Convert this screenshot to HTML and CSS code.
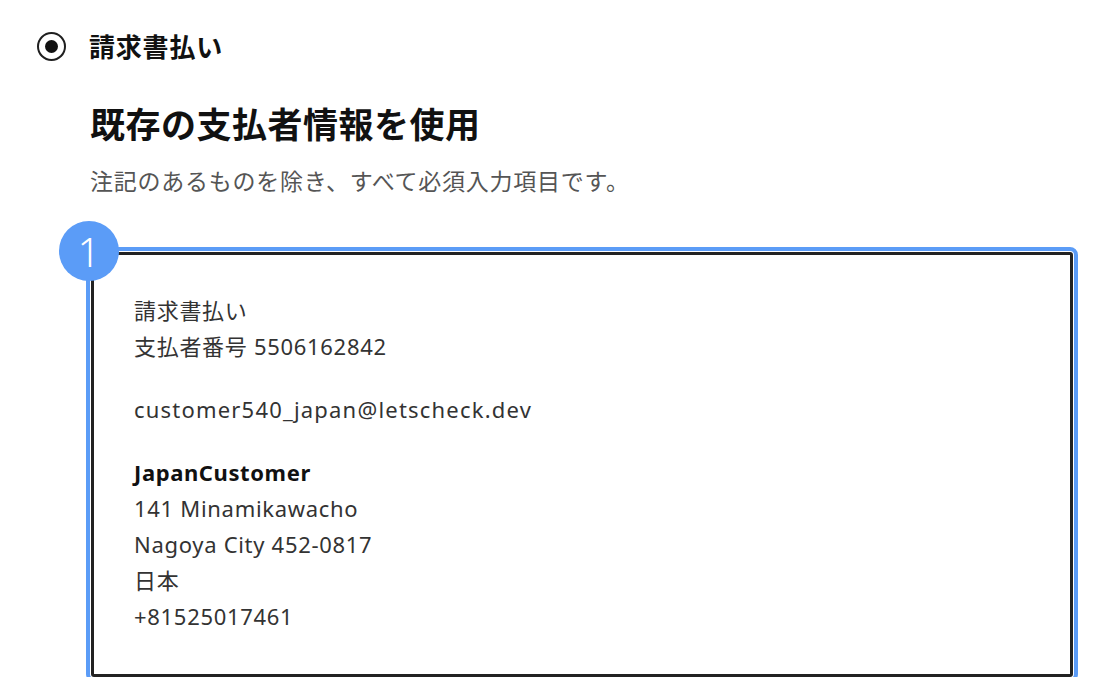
FILE: index.html
```html
<!DOCTYPE html>
<html lang="ja">
<head>
<meta charset="utf-8">
<link rel="stylesheet" href="styles.css">
</head>
<body>
<div class="page">
  <div class="radio-row">
    <span class="radio"><span class="radio-dot"></span></span>
    <span class="radio-label">請求書払い</span>
  </div>
  <div class="section">
    <h1 class="heading">既存の支払者情報を使用</h1>
    <p class="subtitle">注記のあるものを除き、すべて必須入力項目です。</p>
    <div class="card">
      <span class="badge">1</span>
      <div class="group">
        <div class="line">請求書払い</div>
        <div class="line">支払者番号 5506162842</div>
      </div>
      <div class="group">
        <div class="line email">customer540_japan@letscheck.dev</div>
      </div>
      <div class="group">
        <div class="line name">JapanCustomer</div>
        <div class="line">141 Minamikawacho</div>
        <div class="line">Nagoya City 452-0817</div>
        <div class="line">日本</div>
        <div class="line">+81525017461</div>
      </div>
    </div>
  </div>
</div>
</body>
</html>
```

FILE: styles.css
```css
html, body {
  margin: 0;
  padding: 0;
  background: #ffffff;
}
body {
  font-family: "Noto Sans", "Noto Sans CJK JP", sans-serif;
  color: #333333;
}
.page {
  padding: 31px 0 0 37px;
}
.radio-row {
  display: flex;
  align-items: center;
  height: 30px;
  gap: 23px;
}
.radio {
  width: 29px;
  height: 29px;
  box-sizing: border-box;
  border: 2.5px solid #1f1f1f;
  border-radius: 50%;
  display: flex;
  align-items: center;
  justify-content: center;
}
.radio-dot {
  width: 13px;
  height: 13px;
  border-radius: 50%;
  background: #111111;
}
.radio-label {
  font-family: "Noto Sans CJK JP", sans-serif;
  font-size: 26px;
  font-weight: 700;
  color: #111111;
  line-height: 30px;
  letter-spacing: 0.8px;
}
.section {
  margin-left: 53px;
}
.heading {
  margin: 40px 0 0 0;
  font-family: "Noto Sans CJK JP", sans-serif;
  font-size: 35px;
  font-weight: 700;
  line-height: 44px;
  color: #111111;
  letter-spacing: 0.5px;
}
.subtitle {
  margin: 19px 0 0 0;
  font-family: "Noto Sans CJK JP", sans-serif;
  font-size: 23px;
  line-height: 32px;
  color: #555555;
  letter-spacing: 0.75px;
}
.card {
  position: relative;
  margin: 56px 0 0 1px;
  width: 982px;
  box-sizing: border-box;
  border: 3.5px solid #222222;
  border-radius: 3px;
  outline: 4px solid #5b9cf7;
  outline-offset: 1px;
  padding: 37px 40px 40px 40px;
  display: flex;
  flex-direction: column;
  gap: 27px;
}
.badge {
  position: absolute;
  left: -35px;
  top: -34px;
  width: 60px;
  height: 60px;
  border-radius: 50%;
  background: #5b9cf7;
  color: #ffffff;
  font-family: "Noto Sans", sans-serif;
  font-size: 40px;
  font-weight: 300;
  display: flex;
  align-items: center;
  justify-content: center;
  line-height: 1;
  padding-top: 2px;
  box-sizing: border-box;
}
.line {
  font-size: 22px;
  line-height: 36px;
  color: #333333;
  letter-spacing: 0.7px;
}
.email {
  letter-spacing: 1.2px;
}
.name {
  font-weight: 700;
  color: #111111;
  letter-spacing: 0.6px;
}
```
